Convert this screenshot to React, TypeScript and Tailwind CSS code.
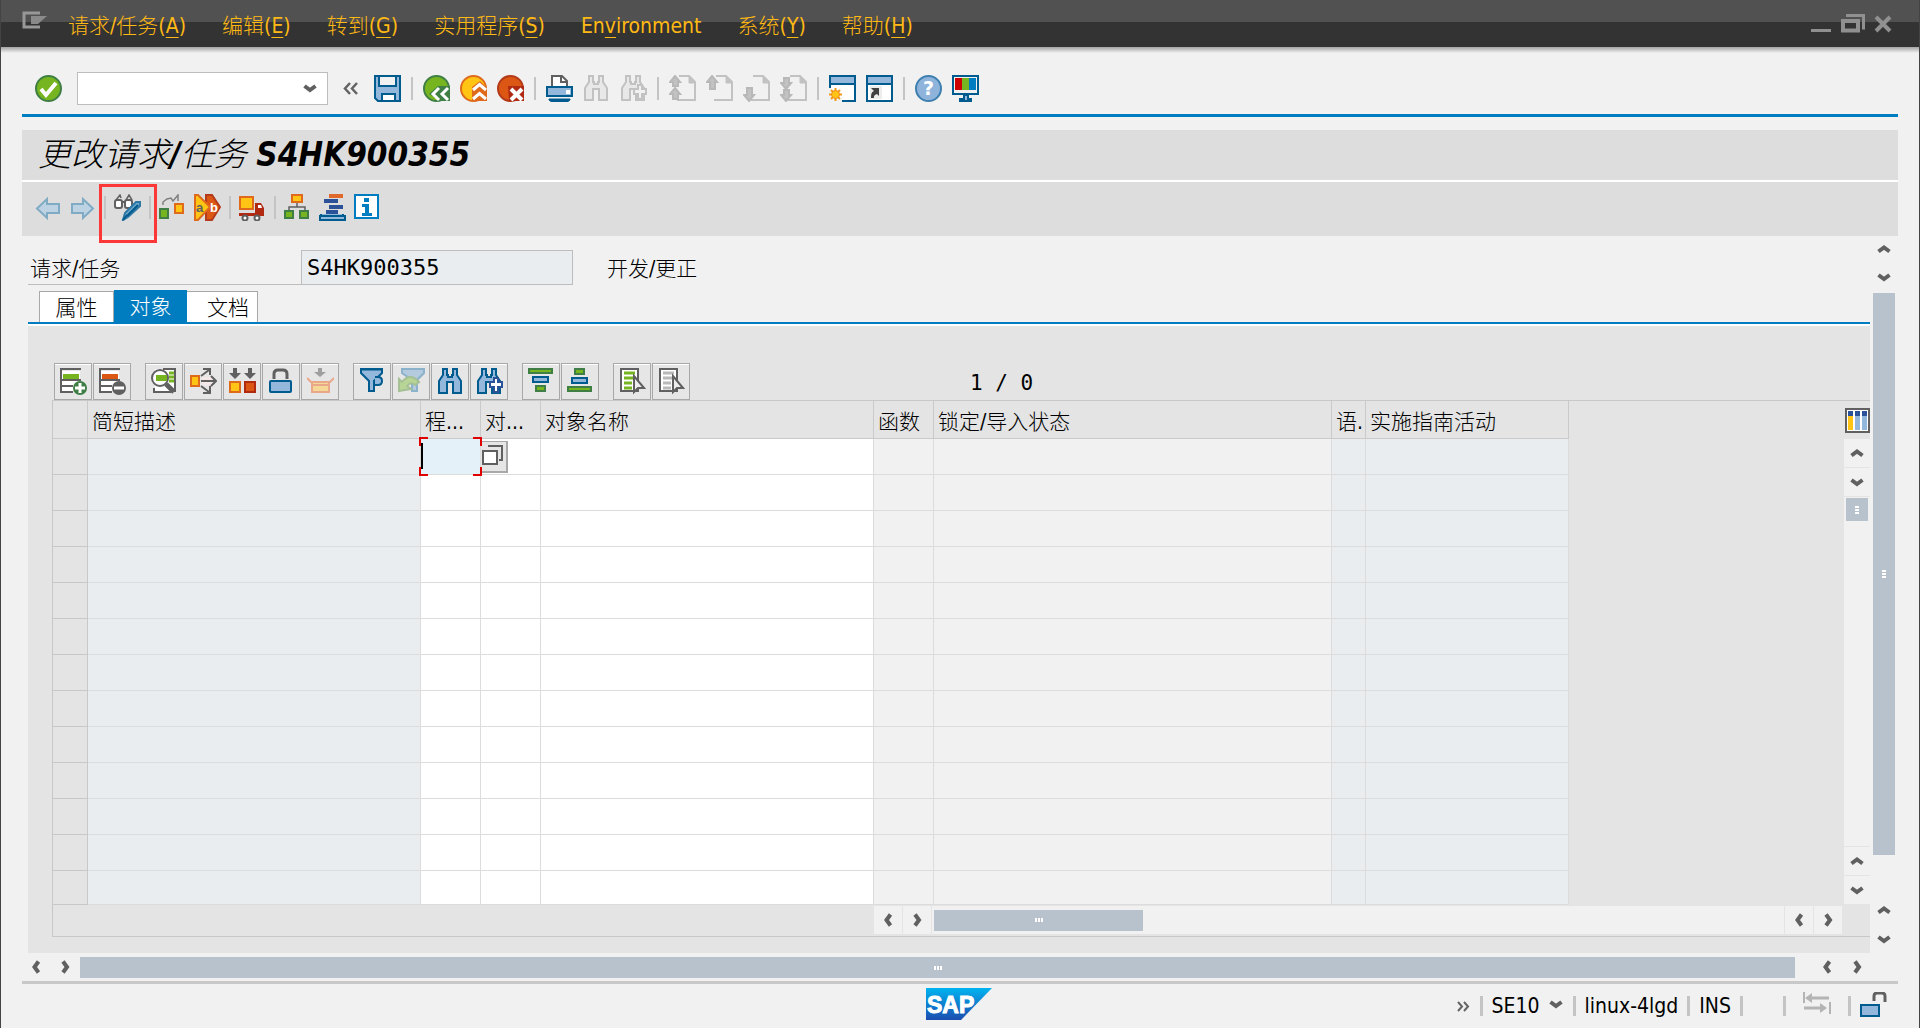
import React, { useState } from 'react';

const MENU = [
    { pre: '请求/任务(', key: 'A', post: ')' },
    { pre: '编辑(', key: 'E', post: ')' },
    { pre: '转到(', key: 'G', post: ')' },
    { pre: '实用程序(', key: 'S', post: ')' },
    { pre: 'En', key: 'v', post: 'ironment' },
    { pre: '系统(', key: 'Y', post: ')' },
    { pre: '帮助(', key: 'H', post: ')' },
];

const COLUMNS = [
    { title: '', col: 'w-[35px]', cell: 'bg-[#e4e4e4] border-[#c8c8c8]' },
    { title: '简短描述', col: 'w-[333px]', cell: 'bg-[#e9edf0] border-[#dcdcdc]' },
    { title: '程...', col: 'w-[60px]', cell: 'bg-white border-[#dcdcdc]' },
    { title: '对...', col: 'w-[60px]', cell: 'bg-white border-[#dcdcdc]' },
    { title: '对象名称', col: 'w-[333px]', cell: 'bg-white border-[#dcdcdc]' },
    { title: '函数', col: 'w-[60px]', cell: 'bg-[#f1f1f1] border-[#dcdcdc]' },
    { title: '锁定/导入状态', col: 'w-[398px]', cell: 'bg-[#f1f1f1] border-[#dcdcdc]' },
    { title: '语.', col: 'w-[34px]', cell: 'bg-[#e9edf0] border-[#dcdcdc]' },
    { title: '实施指南活动', col: 'w-[203px]', cell: 'bg-[#e9edf0] border-[#dcdcdc]' },
];

const ROWS = Array.from({ length: 13 }, (_, i) => i);

function Icon({ children, className = '' }: { children: React.ReactNode; className?: string }) {
    return (
        <svg viewBox="0 0 27 27" className={`w-[27px] h-[27px] shrink-0 ${className}`} fill="none" aria-hidden="true">
            {children}
        </svg>
    );
}

const BINOCULARS = 'M6 1h4v6h1v2h4v-2h1v-6h4v6l4 6v12h-8v-11h-6v11h-8v-12l4-6z';

/* system toolbar */

const CheckIcon = () => (
    <Icon>
        <circle cx="13.5" cy="13.5" r="12.5" fill="#76b51f" stroke="#3f7f45" strokeWidth="2" />
        <path d="M6 14l5 6L21 8" stroke="#fff" strokeWidth="4" />
    </Icon>
);

const SaveIcon = () => (
    <Icon>
        <path d="M1 1h25v25H4l-3-3z" fill="#94b8dc" stroke="#005b8f" strokeWidth="2" />
        <path d="M5 0h17v11H5z" fill="#f1f1f1" stroke="#005b8f" strokeWidth="2" />
        <path d="M5 1h17" stroke="#005b8f" strokeWidth="2" />
        <path d="M8 19h13v7H8z" fill="#fff" stroke="#005b8f" strokeWidth="2" />
    </Icon>
);

const BackIcon = () => (
    <Icon>
        <circle cx="13.5" cy="13.5" r="12.5" fill="#76b51f" stroke="#3f7f45" strokeWidth="2" />
        <path d="M15 11h12v15h-9L6 19z" fill="#3f7f45" />
        <path d="M16 13l-6 6 6 6M25 13l-6 6 6 6" stroke="#fff" strokeWidth="3" />
    </Icon>
);

const ExitIcon = () => (
    <Icon>
        <circle cx="13.5" cy="13.5" r="12.5" fill="#ffc414" stroke="#df6a1c" strokeWidth="2" />
        <path d="M12 12l8-6 7 7v13H12z" fill="#df6a1c" />
        <path d="M13 15l6.500-5.500 6.500 5.500M13 24l6.500-5.500 6.500 5.500" stroke="#fff" strokeWidth="3" />
    </Icon>
);

const CancelIcon = () => (
    <Icon>
        <circle cx="13.5" cy="13.5" r="12.5" fill="#dc5714" stroke="#b33a1a" strokeWidth="2" />
        <path d="M11 11h16v15H12z" fill="#b02a12" />
        <path d="M14 14l11 11M25 14L14 25" stroke="#fff" strokeWidth="4" />
    </Icon>
);

const PrintIcon = () => (
    <Icon>
        <path d="M6 11V1h10l5 5v5" fill="#fff" stroke="#606060" strokeWidth="2" />
        <path d="M15 1v6h6" stroke="#606060" strokeWidth="2" />
        <rect x="1" y="12" width="25" height="9" fill="#94b8dc" stroke="#005b8f" strokeWidth="2" />
        <rect x="20" y="15" width="4" height="4" fill="#fff" />
        <path d="M3 24h21v1l-2 1.500H5L3 25z" fill="#005b8f" stroke="#005b8f" />
    </Icon>
);

const FindIcon = ({ stroke, fill, plus }: { stroke: string; fill: string; plus?: string }) => (
    <Icon>
        <path d={BINOCULARS} fill={fill} stroke={stroke} strokeWidth="2" />
        {plus && <path d="M18 10h4v4h4v5h-4v5h-4v-5h-4v-5h4z" fill={fill === '#e8e8e8' ? '#f1f1f1' : '#fff'} stroke={plus} strokeWidth="2" />}
    </Icon>
);

const PageIcon = ({ arrows }: { arrows: string }) => (
    <Icon>
        <path d="M10 1h10l6 6v18H8" fill="#f1f1f1" stroke="#c2c2c2" strokeWidth="2" />
        <path d="M20 1v7h6z" fill="#c2c2c2" stroke="#c2c2c2" />
        <path d={arrows} fill="#c2c2c2" stroke="#b8b8b8" strokeWidth="2" />
    </Icon>
);

const FIRST_PAGE = 'M6 1l5 6H9v4H4V7H1zM6 13l5 6H9v5H4v-5H1z';
const PREV_PAGE = 'M6 1l5 6H9v7H4V7H1z';
const NEXT_PAGE = 'M6 26l5-6H9v-7H4v7H1z';
const LAST_PAGE = 'M6 14l5-6H9V3H4v5H1zM6 26l5-6H9v-5H4v5H1z';

const NewSessionIcon = () => (
    <Icon>
        <rect x="1" y="1" width="25" height="25" fill="#fff" stroke="#005b8f" strokeWidth="2" />
        <rect x="2" y="2" width="23" height="6" fill="#94b8dc" />
        <path d="M1 9h25" stroke="#005b8f" strokeWidth="2" />
        <path d="M0 13h2v14H0zM2 24h11v3H2z" fill="#f1f1f1" />
        <path d="M6.500 13v13M0 19.500h13M2 15l9 9M11 15l-9 9" stroke="#f09a1c" strokeWidth="2" />
        <circle cx="6.500" cy="19.500" r="4" fill="#ffc414" stroke="#ee8a1c" />
    </Icon>
);

const ShortcutIcon = () => (
    <Icon>
        <rect x="1" y="1" width="25" height="25" fill="#fff" stroke="#005b8f" strokeWidth="2" />
        <rect x="2" y="2" width="23" height="6" fill="#94b8dc" />
        <path d="M1 9h25" stroke="#005b8f" strokeWidth="2" />
        <rect x="4" y="11" width="12" height="13" fill="#ececec" />
        <path d="M5 23c0-5 1-6 3-7l-3-3h8v8l-2-2c-3 1-3 2-3 4z" fill="#404040" />
    </Icon>
);

const HelpIcon = () => (
    <Icon>
        <circle cx="13.5" cy="13.5" r="12.5" fill="#8fb4dc" stroke="#3d7fae" strokeWidth="2" />
        <text x="13.5" y="20" textAnchor="middle" fontSize="19" fontWeight="700" fontFamily="DejaVu Sans, sans-serif" fill="#fff">?</text>
    </Icon>
);

const MonitorIcon = () => (
    <Icon>
        <rect x="1" y="1" width="25" height="18" fill="#f1f1f1" stroke="#005b8f" strokeWidth="2" />
        <path d="M3 3h7v12H3z" fill="#cc0000" />
        <path d="M10 3h7v12h-7z" fill="#76b51f" />
        <path d="M17 3h7v12h-7z" fill="#007cc0" />
        <path d="M12 20h4v4h3v2H8v-2h4z" fill="#94b8dc" stroke="#005b8f" strokeWidth="2" />
    </Icon>
);

/* application toolbar */

const LeftArrowIcon = () => (
    <Icon>
        <path d="M3 14.500L13 5v5h12v9H13v5z" fill="#bdd3e4" stroke="#7fabc4" strokeWidth="2" />
    </Icon>
);

const RightArrowIcon = () => (
    <Icon>
        <path d="M24 14.500L14 5v5H3v9h11v5z" fill="#bdd3e4" stroke="#7fabc4" strokeWidth="2" />
    </Icon>
);

const DisplayChangeIcon = () => (
    <Icon>
        <path d="M2 6l4-5 1 3M12 6l3-5 3 5" stroke="#606060" strokeWidth="1.500" />
        <rect x="1" y="6" width="7" height="8" rx="2" fill="#fff" stroke="#606060" strokeWidth="2" />
        <rect x="11" y="6" width="7" height="8" rx="2" fill="#fff" stroke="#606060" strokeWidth="2" />
        <path d="M8 8h3" stroke="#606060" strokeWidth="2" />
        <path d="M22 8h4v4L14 23l-5 3 2-7z" fill="#6aa6cc" stroke="#2f78a6" strokeWidth="2" />
        <path d="M9 26l4-5M24 11L13 22" stroke="#00598c" strokeWidth="2" />
    </Icon>
);

const TransferIcon = () => (
    <Icon>
        <path d="M4 11V8l4-3 4-1 2 3 5-6v6" stroke="#808080" strokeWidth="1.500" />
        <rect x="1" y="15" width="8" height="9" fill="#76b51f" stroke="#3f7f45" strokeWidth="2" />
        <rect x="16" y="10" width="8" height="9" fill="#ffc414" stroke="#df6a1c" strokeWidth="2" />
    </Icon>
);

const MergeIcon = () => (
    <Icon>
        <path d="M12 1h6l8 12-8 13h-6z" fill="#dc5714" stroke="#b33a1a" strokeWidth="2" />
        <path d="M1 1h3l12 12L4 26H1z" fill="#ffc414" stroke="#df6a1c" strokeWidth="2" />
        <text x="2" y="18" fontSize="13" fontWeight="700" fontFamily="Liberation Sans, sans-serif" fill="#606060">a</text>
        <text x="16" y="18" fontSize="13" fontWeight="700" fontFamily="Liberation Sans, sans-serif" fill="#fff">b</text>
    </Icon>
);

const TruckIcon = () => (
    <Icon>
        <rect x="1" y="3" width="13" height="12" fill="#ffc414" stroke="#df6a1c" strokeWidth="2" />
        <path d="M16 9h6l3 5v8H0v-3h16z" fill="#b02a12" />
        <path d="M19 11h3l1 3h-4z" fill="#fff" />
        <circle cx="6" cy="24" r="2.500" fill="#fff" stroke="#606060" strokeWidth="2" />
        <circle cx="18" cy="24" r="2.500" fill="#fff" stroke="#606060" strokeWidth="2" />
    </Icon>
);

const HierarchyIcon = () => (
    <Icon>
        <path d="M13 9v4M5 16v-3h16v3" stroke="#606060" strokeWidth="1.500" />
        <rect x="8" y="1" width="10" height="7" fill="#ffc414" stroke="#df6a1c" strokeWidth="2" />
        <rect x="1" y="17" width="8" height="7" fill="#76b51f" stroke="#3f7f45" strokeWidth="2" />
        <rect x="16" y="17" width="8" height="7" fill="#76b51f" stroke="#3f7f45" strokeWidth="2" />
    </Icon>
);

const LogIcon = () => (
    <Icon>
        <path d="M10 0h14v4H10z" fill="#df6a2c" />
        <path d="M5 5h14v4H5zM10 11h14v4H10zM7 16h12v4H7z" fill="#2b5299" />
        <path d="M2 20v2h22v-2M1 26v-4h25v4z" fill="#94b8dc" stroke="#005b8f" strokeWidth="2" />
    </Icon>
);

const InfoIcon = () => (
    <Icon>
        <rect x="1" y="1" width="23" height="23" fill="#fff" stroke="#007cc0" strokeWidth="2" />
        <path d="M10 4h5v4h-5zM8 10h7v9h3v3H8v-3h3v-6H8z" fill="#007cc0" />
    </Icon>
);

/* table toolbar */

const InsertRowIcon = () => (
    <Icon>
        <path d="M2 3h18v20H2z" fill="#fff" />
        <path d="M3 6h16v5H3z" fill="#76b51f" />
        <path d="M21 1H1v23h12M1 12h20M1 18h12" stroke="#606060" strokeWidth="2" />
        <circle cx="20" cy="20" r="6" fill="#3f7f45" stroke="#3f7f45" strokeWidth="2" />
        <path d="M20 15v10M15 20h10" stroke="#fff" strokeWidth="3" />
    </Icon>
);

const DeleteRowIcon = () => (
    <Icon>
        <path d="M2 3h18v20H2z" fill="#fff" />
        <path d="M3 6h16v5H3z" fill="#dc5714" />
        <path d="M21 1H1v23h12M1 12h20M1 18h12" stroke="#606060" strokeWidth="2" />
        <circle cx="20" cy="20" r="7" fill="#606060" />
        <path d="M15 20h10" stroke="#fff" strokeWidth="3" />
    </Icon>
);

const DetailIcon = () => (
    <Icon>
        <path d="M4 1h20v23H4z" fill="#fff" />
        <path d="M12 1h12v23M3 20v4h17" stroke="#606060" strokeWidth="2" />
        <path d="M18 5h5M18 9h5M18 13h5" stroke="#76b51f" strokeWidth="3" />
        <circle cx="9" cy="10" r="8" fill="#fff" stroke="#606060" strokeWidth="2" />
        <rect x="5" y="7" width="11" height="6" fill="#76b51f" />
        <path d="M15 16l8 8" stroke="#606060" strokeWidth="5" />
    </Icon>
);

const ExpandIcon = () => (
    <Icon>
        <path d="M12 9h10v8H12z" fill="#f6e8e8" />
        <path d="M11 8l8-6M13 1h7v6M11 18l8 6M13 25h7v-7M11 13h14M21 8l5 5-5 5" stroke="#606060" strokeWidth="2" />
        <rect x="1" y="8" width="8" height="10" fill="#ffc414" stroke="#df6a1c" strokeWidth="2" />
    </Icon>
);

const ReplaceIcon = () => (
    <Icon>
        <path d="M4 0h4v5h4l-6 6-6-6h4zM19 0h4v5h4l-6 6-6-6h4z" fill="#606060" />
        <rect x="1" y="14" width="10" height="10" fill="#ffc414" stroke="#df6a1c" strokeWidth="2" />
        <rect x="16" y="14" width="10" height="10" fill="#dc5714" stroke="#b02a12" strokeWidth="2" />
    </Icon>
);

const LockIcon = () => (
    <Icon>
        <path d="M6 11V6q0-4 4-4h5q4 0 4 4v5" stroke="#606060" strokeWidth="3" />
        <rect x="2" y="13" width="21" height="11" rx="1" fill="#94b8dc" stroke="#005b8f" strokeWidth="2" />
    </Icon>
);

const PackIcon = () => (
    <Icon className="opacity-60">
        <path d="M11 0h4v4h4l-6 5-6-5h4z" fill="#707070" />
        <path d="M5 14h17v10H5z" fill="#ffd060" stroke="#ee8050" strokeWidth="2" />
        <path d="M0 10l4 4h19l4-4M5 17h17" stroke="#ee8050" strokeWidth="2" />
    </Icon>
);

const FilterIcon = () => (
    <Icon>
        <path d="M2 1h21v4l-8 8v10h-5V13L2 5z" fill="#94b8dc" stroke="#005b8f" strokeWidth="2" />
        <path d="M2 1h21" stroke="#005b8f" strokeWidth="3" />
        <path d="M16 9h3q4 0 4 4t-4 4h-3" fill="#94b8dc" stroke="#005b8f" strokeWidth="2" />
    </Icon>
);

const ClearFilterIcon = () => (
    <Icon className="opacity-60">
        <path d="M4 1h22v4l-7 7v11h-5V12L4 5z" fill="#94b8dc" stroke="#4f90b8" strokeWidth="2" />
        <path d="M1 23V11l3 3q8-10 17 0l-4 3q-4-4-8 1l4 3z" fill="#9ccb60" stroke="#7aa860" strokeWidth="2" />
    </Icon>
);

const SortAscIcon = () => (
    <Icon>
        <path d="M1 1h23v4H1z" fill="#76b51f" stroke="#3f7f45" strokeWidth="2" />
        <path d="M5 9h15v5H5z" fill="#94b8dc" stroke="#005b8f" strokeWidth="2" />
        <path d="M8 18h9v5H8z" fill="#76b51f" stroke="#3f7f45" strokeWidth="2" />
    </Icon>
);

const SortDescIcon = () => (
    <Icon>
        <path d="M8 1h9v5H8z" fill="#76b51f" stroke="#3f7f45" strokeWidth="2" />
        <path d="M5 10h15v5H5z" fill="#94b8dc" stroke="#005b8f" strokeWidth="2" />
        <path d="M1 19h23v4H1z" fill="#76b51f" stroke="#3f7f45" strokeWidth="2" />
    </Icon>
);

const SelectIcon = ({ color }: { color: string }) => (
    <Icon>
        <path d="M2 1h17v22H2z" fill="#fff" stroke="#606060" strokeWidth="2" />
        <path d="M5 5h11M5 10h11M5 15h8M5 20h8" stroke={color} strokeWidth="3" />
        <path d="M15 8v16l4-4h6z" fill="#eee" stroke="#606060" strokeWidth="2" />
    </Icon>
);

const LayoutIcon = () => (
    <svg viewBox="0 0 25 25" className="w-[25px] h-[25px]" fill="none" aria-hidden="true">
        <rect x="1" y="1" width="23" height="23" fill="#fff" stroke="#606060" strokeWidth="2" />
        <path d="M3 3h5v5H3zM10 3h5v5h-5zM17 3h5v5h-5z" fill="#2b5299" />
        <path d="M3 8h5v14H3z" fill="#ffc414" />
        <path d="M10 8h5v14h-5zM17 8h5v14h-5z" fill="#94b8dc" />
    </svg>
);

const CHEVRONS = {
    up: 'M1.500 9.500l5.500-4 5.500 4',
    down: 'M1.500 5l5.500 4 5.500-4',
    left: 'M9.500 1.500l-4 5.500 4 5.500',
    right: 'M5 1.500l4 5.500-4 5.500',
};

function Chevron({ dir }: { dir: keyof typeof CHEVRONS }) {
    return (
        <svg viewBox="0 0 15 15" className="w-[15px] h-[15px]" fill="none" aria-hidden="true">
            <path d={CHEVRONS[dir]} stroke="#606060" strokeWidth="4" />
        </svg>
    );
}

function ScrollButton({ dir, label, className = '' }: { dir: keyof typeof CHEVRONS; label: string; className?: string }) {
    return (
        <button aria-label={label} className={`flex items-center justify-center shrink-0 ${className}`}>
            <Chevron dir={dir} />
        </button>
    );
}

function Grip({ vertical }: { vertical?: boolean }) {
    const dot = vertical ? 'w-1 h-0.5 bg-white' : 'w-0.5 h-1 bg-white';
    return (
        <div className={`flex gap-px ${vertical ? 'flex-col' : ''}`}>
            <i className={dot} />
            <i className={dot} />
            <i className={dot} />
        </div>
    );
}

const Sep = () => <div className="w-0.5 h-[23px] bg-[#c4c4c4] shrink-0" />;
const StatusSep = () => <div className="w-[3px] h-5 bg-[#c4c4c4] shrink-0" />;

function Tool({ label, children }: { label: string; children: React.ReactNode }) {
    return (
        <button aria-label={label} className="relative shrink-0">
            {children}
        </button>
    );
}

function GridTool({ label, children }: { label: string; children: React.ReactNode }) {
    return (
        <button
            aria-label={label}
            className="w-[38px] h-[37px] flex items-center justify-center border border-[#a8a8a8] bg-[#e6e6e6] shadow-[inset_0_1px_0_#fff]"
        >
            {children}
        </button>
    );
}

function ObjectTable() {
    const [program, setProgram] = useState('');

    return (
        <table className="table-fixed w-[1516px] border-separate border-spacing-0">
            <colgroup>
                {COLUMNS.map((c, i) => (
                    <col key={i} className={c.col} />
                ))}
            </colgroup>
            <thead>
                <tr className="h-[38px]">
                    {COLUMNS.map((c, i) => (
                        <th
                            key={i}
                            className="p-0 pl-1 pt-1 text-left font-normal whitespace-nowrap overflow-hidden border-r border-b border-[#cacaca]"
                        >
                            {c.title}
                        </th>
                    ))}
                </tr>
            </thead>
            <tbody>
                {ROWS.map(row => (
                    <tr key={row} className="h-9 last:h-[34px]">
                        {COLUMNS.map((c, i) => (
                            <td key={i} className={`p-0 border-r border-b ${c.cell}`}>
                                {row === 0 && i === 2 && (
                                    <div className="relative h-[35px]">
                                        <input
                                            aria-label="程序标识"
                                            value={program}
                                            onChange={e => setProgram(e.target.value)}
                                            className="w-full h-full bg-[#e4f1f9] px-1 outline-none"
                                        />
                                        <i className="absolute left-0 top-1 w-0.5 h-[26px] bg-black" />
                                        <i className="absolute -left-0.5 -top-0.5 w-[9px] h-[9px] border-l-2 border-t-2 border-[#e00000]" />
                                        <i className="absolute -right-0.5 -top-0.5 w-[9px] h-[9px] border-r-2 border-t-2 border-[#e00000]" />
                                        <i className="absolute -left-0.5 -bottom-0.5 w-[9px] h-[9px] border-l-2 border-b-2 border-[#e00000]" />
                                        <i className="absolute -right-0.5 -bottom-0.5 w-[9px] h-[9px] border-r-2 border-b-2 border-[#e00000]" />
                                    </div>
                                )}
                                {row === 0 && i === 3 && (
                                    <button
                                        aria-label="F4"
                                        className="block w-[27px] h-8 pl-px bg-[#e6e6e6] border-r-2 border-b-2 border-t border-[#a8a8a8]"
                                    >
                                        <svg viewBox="0 0 24 24" className="w-6 h-6" fill="none" aria-hidden="true">
                                            <path d="M6 2h14v14h-3" stroke="#606060" strokeWidth="2" />
                                            <path d="M1 7h14v13H1z" fill="#fff" stroke="#606060" strokeWidth="2" />
                                        </svg>
                                    </button>
                                )}
                            </td>
                        ))}
                    </tr>
                ))}
            </tbody>
        </table>
    );
}

export default function App() {
    const [command, setCommand] = useState('');
    const [tab, setTab] = useState('对象');

    return (
        <div className="min-h-screen flex flex-col border-x border-[#444] bg-[#f1f1f1] text-black text-[21px] leading-6 font-['DejaVu_Sans_Condensed','Noto_Sans_CJK_SC_Light','Noto_Sans_CJK_SC',sans-serif]">
            <header className="h-[47px] flex items-center pl-[21px] pr-[27px] bg-linear-to-b from-[#515151] from-47% to-[#333] to-47%">
                <svg viewBox="0 0 26 20" className="w-[26px] h-5 mb-1.5" fill="none" aria-hidden="true">
                    <path d="M18 2H2v14h16" stroke="#989898" strokeWidth="3" />
                    <path d="M9 5h16l-9 8H9z" fill="#8a8a8a" />
                </svg>
                <nav className="flex gap-9 pl-5 pt-1">
                    {MENU.map(m => (
                        <button key={m.key} className="text-[#ffb914]">
                            {m.pre}
                            <span className="underline underline-offset-4 decoration-1">{m.key}</span>
                            {m.post}
                        </button>
                    ))}
                </nav>
                <div className="ml-auto flex gap-2">
                    <button aria-label="最小化">
                        <svg viewBox="0 0 22 20" className="w-[22px] h-5" aria-hidden="true">
                            <path d="M1 15h20v3H1z" fill="#909090" />
                        </svg>
                    </button>
                    <button aria-label="还原">
                        <svg viewBox="0 0 26 20" className="w-[26px] h-5" fill="none" aria-hidden="true">
                            <path d="M6 1.500h17.500v14" stroke="#909090" strokeWidth="3" />
                            <path d="M3 7h15v9.500H3z" stroke="#909090" strokeWidth="4" />
                        </svg>
                    </button>
                    <button aria-label="关闭">
                        <svg viewBox="0 0 18 20" className="w-[18px] h-5" fill="none" aria-hidden="true">
                            <path d="M2 3l14 14M16 3L2 17" stroke="#909090" strokeWidth="4" />
                        </svg>
                    </button>
                </div>
            </header>
            <div className="h-1.5 bg-linear-to-b from-[#a4a4a4] to-[#f1f1f1]" />

            <div className="mx-[21px] pt-[19px] pb-[9px] pl-[13px] flex items-center gap-[10px] border-b-[3px] border-[#007cc0]">
                <Tool label="输入"><CheckIcon /></Tool>
                <div className="relative mx-[5px] w-[251px] h-[33px]">
                    <input
                        aria-label="命令字段"
                        value={command}
                        onChange={e => setCommand(e.target.value)}
                        className="w-full h-full px-1 bg-white border border-[#bdbdbd] outline-none"
                    />
                    <button aria-label="历史" className="absolute right-2.5 top-[9px]"><Chevron dir="down" /></button>
                </div>
                <button aria-label="隐藏命令字段">
                    <svg viewBox="0 0 21 15" className="w-[21px] h-[15px]" fill="none" aria-hidden="true">
                        <path d="M7 2L2 7.500 7 13M14 2L9 7.500l5 5.500" stroke="#646464" strokeWidth="2.500" />
                    </svg>
                </button>
                <Tool label="保存"><SaveIcon /></Tool>
                <Sep />
                <Tool label="返回"><BackIcon /></Tool>
                <Tool label="退出"><ExitIcon /></Tool>
                <Tool label="取消"><CancelIcon /></Tool>
                <Sep />
                <Tool label="打印"><PrintIcon /></Tool>
                <Tool label="查找"><FindIcon stroke="#c2c2c2" fill="#e8e8e8" /></Tool>
                <Tool label="查找下一个"><FindIcon stroke="#c2c2c2" fill="#e8e8e8" plus="#c2c2c2" /></Tool>
                <Sep />
                <Tool label="首页"><PageIcon arrows={FIRST_PAGE} /></Tool>
                <Tool label="上一页"><PageIcon arrows={PREV_PAGE} /></Tool>
                <Tool label="下一页"><PageIcon arrows={NEXT_PAGE} /></Tool>
                <Tool label="末页"><PageIcon arrows={LAST_PAGE} /></Tool>
                <Sep />
                <Tool label="新建会话"><NewSessionIcon /></Tool>
                <Tool label="创建快捷方式"><ShortcutIcon /></Tool>
                <Sep />
                <Tool label="帮助"><HelpIcon /></Tool>
                <Tool label="定制本地布局"><MonitorIcon /></Tool>
            </div>

            <h1 className="mx-[21px] mt-[13px] h-[50px] pl-4 flex items-center bg-[#ddd] text-[33px] italic">
                <span className="whitespace-pre">
                    更改请求<b>/</b>任务 <b>S4HK900355</b>
                </span>
            </h1>
            <div className="mx-[21px] mt-0.5 h-[54px] pl-3 pb-[3px] flex items-center gap-2 bg-[#ddd] shadow-[0_-2px_0_#fff]">
                <Tool label="上一个对象"><LeftArrowIcon /></Tool>
                <Tool label="下一个对象"><RightArrowIcon /></Tool>
                <Sep />
                <Tool label="显示/更改">
                    <DisplayChangeIcon />
                    <i className="absolute -left-[15px] -top-[10px] w-[58px] h-[59px] border-3 border-[#fb3737]" />
                </Tool>
                <Sep />
                <Tool label="其他请求"><TransferIcon /></Tool>
                <Tool label="合并"><MergeIcon /></Tool>
                <Sep />
                <Tool label="释放"><TruckIcon /></Tool>
                <Sep />
                <Tool label="层次"><HierarchyIcon /></Tool>
                <Tool label="日志"><LogIcon /></Tool>
                <Tool label="信息"><InfoIcon /></Tool>
            </div>

            <main className="flex-1 flex pl-[27px] pr-6">
                <div className="flex-1 min-w-0 flex flex-col">
                    <div className="mt-[14px] h-[35px] flex">
                        <label htmlFor="request" className="w-[273px] pl-0.5 pt-[7px] border-b border-[#bdbdbd]">
                            请求/任务
                        </label>
                        <input
                            id="request"
                            readOnly
                            value="S4HK900355"
                            className="w-[272px] px-[5px] bg-[#e9edf0] border border-[#bdbdbd] outline-none text-[22px] font-['DejaVu_Sans_Mono',monospace]"
                        />
                        <span className="pl-[34px] pt-[7px]">开发/更正</span>
                    </div>

                    <div role="tablist" className="mt-[5px] pl-[11px] h-[34px] flex border-b-2 border-[#007cc0]">
                        {['属性', '对象', '文档'].map(t => (
                            <button
                                key={t}
                                role="tab"
                                aria-selected={tab === t}
                                onClick={() => setTab(t)}
                                className={
                                    tab === t
                                        ? 'w-[73px] pt-0.5 bg-[#007cc0] text-white'
                                        : 'w-[75px] mt-px pt-px bg-white border border-b-0 border-[#a8a8a8] last:w-[71px] last:pl-3 last:border-l-0'
                                }
                            >
                                {t}
                            </button>
                        ))}
                    </div>

                    <section className="flex-1 flex flex-col pt-[37px] pb-4 pl-6 bg-[#e4e4e4] border-t-2 border-white">
                        <div className="flex items-center gap-[14px] pl-0.5">
                            <div className="flex gap-px">
                                <GridTool label="插入行"><InsertRowIcon /></GridTool>
                                <GridTool label="删除行"><DeleteRowIcon /></GridTool>
                            </div>
                            <div className="flex gap-px">
                                <GridTool label="详细信息"><DetailIcon /></GridTool>
                                <GridTool label="展开"><ExpandIcon /></GridTool>
                                <GridTool label="替换"><ReplaceIcon /></GridTool>
                                <GridTool label="锁定"><LockIcon /></GridTool>
                                <GridTool label="打包"><PackIcon /></GridTool>
                            </div>
                            <div className="flex gap-px">
                                <GridTool label="过滤"><FilterIcon /></GridTool>
                                <GridTool label="删除过滤"><ClearFilterIcon /></GridTool>
                                <GridTool label="查找"><FindIcon stroke="#005b8f" fill="#94b8dc" /></GridTool>
                                <GridTool label="查找下一个"><FindIcon stroke="#005b8f" fill="#94b8dc" plus="#2b5299" /></GridTool>
                            </div>
                            <div className="flex gap-px">
                                <GridTool label="升序"><SortAscIcon /></GridTool>
                                <GridTool label="降序"><SortDescIcon /></GridTool>
                            </div>
                            <div className="flex gap-px">
                                <GridTool label="全选"><SelectIcon color="#76b51f" /></GridTool>
                                <GridTool label="取消全选"><SelectIcon color="#b8b8b8" /></GridTool>
                            </div>
                            <span className="pl-[266px] pt-0.5 font-['DejaVu_Sans_Mono',monospace]">1 / 0</span>
                        </div>

                        <div className="flex-1 flex border border-r-0 border-[#c8c8c8]">
                            <div className="flex-1 min-w-0 flex flex-col">
                                <ObjectTable />
                                <div className="mt-px ml-[821px] mr-0.5 h-7 flex gap-px">
                                    <ScrollButton dir="left" label="向左滚动" className="w-7 bg-[#f1f1f1]" />
                                    <ScrollButton dir="right" label="向右滚动" className="w-7 bg-[#f1f1f1]" />
                                    <div className="flex-1 pl-0.5 flex items-center bg-[#f1f1f1]">
                                        <div className="w-[209px] h-[21px] flex items-center justify-center bg-[#b8c2cc]">
                                            <Grip />
                                        </div>
                                    </div>
                                    <ScrollButton dir="left" label="向左滚动" className="w-7 bg-[#f1f1f1]" />
                                    <ScrollButton dir="right" label="向右滚动" className="w-7 bg-[#f1f1f1]" />
                                </div>
                            </div>
                            <div className="w-[26px] mb-8 flex flex-col gap-px">
                                <button aria-label="表格设置" className="h-[37px] pb-[5px] pl-px flex items-end">
                                    <LayoutIcon />
                                </button>
                                <ScrollButton dir="up" label="向上滚动" className="h-7 bg-[#f1f1f1]" />
                                <ScrollButton dir="down" label="向下滚动" className="h-7 bg-[#f1f1f1]" />
                                <div className="flex-1 pt-px flex flex-col items-center bg-[#f1f1f1]">
                                    <div className="w-[22px] h-[23px] flex items-center justify-center bg-[#b8c2cc]">
                                        <Grip vertical />
                                    </div>
                                </div>
                                <ScrollButton dir="up" label="向上滚动" className="h-7 bg-[#f1f1f1]" />
                                <ScrollButton dir="down" label="向下滚动" className="h-7 bg-[#f1f1f1]" />
                            </div>
                        </div>
                    </section>
                </div>

                <div className="w-[22px] ml-[3px] flex flex-col items-center">
                    <ScrollButton dir="up" label="向上滚动" className="h-[26px]" />
                    <ScrollButton dir="down" label="向下滚动" className="h-[31px]" />
                    <div className="w-full flex-1 mb-10 flex items-center justify-center bg-[#b8c2cc]">
                        <Grip vertical />
                    </div>
                    <ScrollButton dir="up" label="向上滚动" className="h-[30px]" />
                    <ScrollButton dir="down" label="向下滚动" className="h-7" />
                </div>
            </main>

            <div className="mx-[21px] pt-1 pb-[3px] flex items-center border-b-[3px] border-[#c8c8c8]">
                <ScrollButton dir="left" label="向左滚动" className="w-7" />
                <ScrollButton dir="right" label="向右滚动" className="w-[30px]" />
                <div className="flex-1 h-[21px] mr-[17px] flex items-center justify-center bg-[#b8c2cc]">
                    <Grip />
                </div>
                <ScrollButton dir="left" label="向左滚动" className="w-[30px]" />
                <ScrollButton dir="right" label="向右滚动" className="w-[30px]" />
                <div className="w-[26px]" />
            </div>

            <footer className="h-11 pr-8 flex items-center">
                <div className="flex-1" />
                <svg viewBox="0 0 66 32" className="w-[66px] h-8 mb-1 ml-[30px] shrink-0" role="img" aria-label="SAP">
                    <defs>
                        <linearGradient id="sap" x1="0" y1="0" x2="0" y2="1">
                            <stop offset="0" stopColor="#00b4f0" />
                            <stop offset="1" stopColor="#1c4cb0" />
                        </linearGradient>
                    </defs>
                    <path d="M0 0h66L35 32H0z" fill="url(#sap)" />
                    <text x="1" y="25" fontSize="23" fontWeight="700" fontFamily="Liberation Sans, sans-serif" fill="#fff" stroke="#fff">SAP</text>
                </svg>
                <div className="flex-1 flex items-center justify-end gap-[9px]">
                    <button aria-label="显示状态栏">
                        <svg viewBox="0 0 15 15" className="w-[15px] h-[15px]" fill="none" aria-hidden="true">
                            <path d="M2 3l4 4.500L2 12M8 3l4 4.500L8 12" stroke="#646464" strokeWidth="2" />
                        </svg>
                    </button>
                    <StatusSep />
                    <span>SE10</span>
                    <button aria-label="系统信息" className="pb-1"><Chevron dir="down" /></button>
                    <StatusSep />
                    <span>linux-4lgd</span>
                    <StatusSep />
                    <span>INS</span>
                    <StatusSep />
                    <div className="w-[22px]" />
                    <StatusSep />
                    <svg viewBox="0 0 44 24" className="w-11 h-6 mb-1.5" fill="none" aria-hidden="true">
                        <path d="M9 1v11M35 11v12" stroke="#b4b4b4" strokeWidth="2" />
                        <path d="M14 7h20M9 17h20" stroke="#b4b4b4" strokeWidth="3" />
                        <path d="M10 7l7-5v10zM32 17l-7-5v10z" fill="#b4b4b4" />
                    </svg>
                    <StatusSep />
                    <svg viewBox="0 0 27 25" className="w-[27px] h-[25px] mb-1" fill="none" aria-hidden="true">
                        <path d="M14 9V4q0-3 3-3h5q3 0 3 3v6" stroke="#606060" strokeWidth="3" />
                        <rect x="1" y="13" width="18" height="11" fill="#94b8dc" stroke="#005b8f" strokeWidth="2" />
                    </svg>
                </div>
            </footer>
        </div>
    );
}
